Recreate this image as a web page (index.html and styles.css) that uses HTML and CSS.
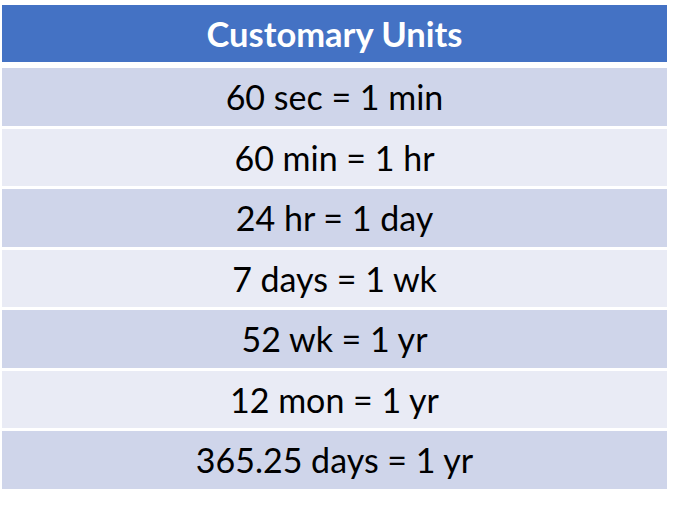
FILE: index.html
```html
<!DOCTYPE html>
<html>
<head>
<meta charset="utf-8">
<link rel="stylesheet" href="styles.css">
</head>
<body>
<div class="table">
  <div class="head">Customary Units</div>
  <div class="row odd">60 sec = 1 min</div>
  <div class="row even">60 min = 1 hr</div>
  <div class="row odd">24 hr = 1 day</div>
  <div class="row even">7 days = 1 wk</div>
  <div class="row odd">52 wk = 1 yr</div>
  <div class="row even">12 mon = 1 yr</div>
  <div class="row odd">365.25 days = 1 yr</div>
</div>
</body>
</html>
```
FILE: styles.css
```css
html, body {
  margin: 0;
  padding: 0;
  background: #ffffff;
}
.table {
  margin: 5px 0 0 2px;
  width: 665px;
  display: flex;
  flex-direction: column;
  gap: 3px;
  font-family: "Lato", "Liberation Sans", sans-serif;
}
.head {
  height: 57px;
  margin-bottom: 3px;
  background: #4472C4;
  color: #ffffff;
  font-weight: bold;
  font-size: 34.5px;
  display: flex;
  align-items: center;
  justify-content: center;
}
.row {
  height: 57.5px;
  font-size: 34px;
  color: #000000;
  display: flex;
  align-items: center;
  justify-content: center;
}
.odd { background: #CFD5EA; }
.even { background: #E9EBF5; }
```
